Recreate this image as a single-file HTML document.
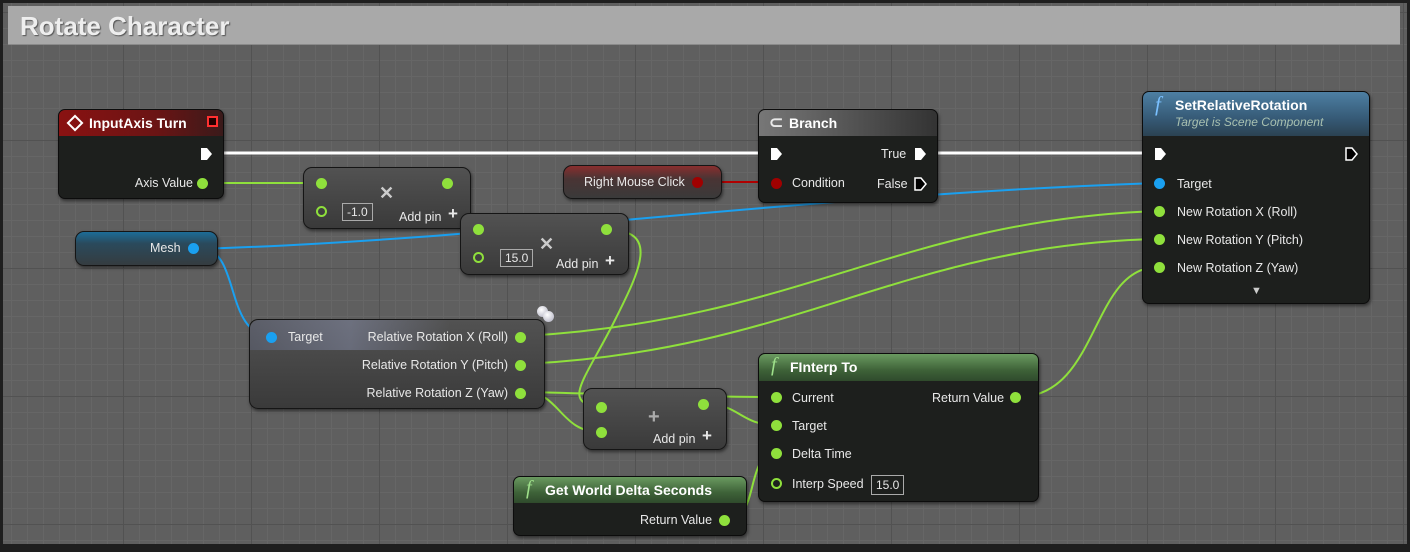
<!DOCTYPE html>
<html><head><meta charset="utf-8"><style>
*{margin:0;padding:0;box-sizing:border-box}
body{width:1410px;height:552px;background:#1e1e1e;overflow:hidden;position:relative;font-family:"Liberation Sans",sans-serif;color:#e8e8e8;font-size:12.5px}
#g{position:absolute;left:3px;top:3px;width:1404px;height:541px;background-color:#5f5f5f;
background-image:linear-gradient(#525252 1px,transparent 1px),linear-gradient(90deg,#525252 1px,transparent 1px),linear-gradient(#666 1px,transparent 1px),linear-gradient(90deg,#666 1px,transparent 1px);
background-size:128px 128px,128px 128px,16px 16px,16px 16px;background-position:-8px 9px,-8px 9px,-8px 9px,-8px 9px}
.ch{position:absolute;left:8px;top:6px;width:1392px;height:39px;background:#a9a9a9;border-bottom:1px solid #8a8a8a}
.ch span{position:absolute;left:12px;top:5px;font-size:26px;font-weight:bold;color:#eee;text-shadow:1px 1px 1px #555}
.n{position:absolute;background:#1d1f1d;border:1px solid #0c0c0c;border-radius:7px;box-shadow:1px 2px 3px rgba(0,0,0,.5);overflow:hidden}
.h{position:absolute;left:0;right:0;top:0;font-weight:bold;font-size:14px;padding-left:30px;padding-top:5px;color:#fff}
.c{position:absolute;background:linear-gradient(#525252,#3a3a3a);border:1px solid #151515;border-radius:9px;box-shadow:1px 2px 3px rgba(0,0,0,.5)}
.t{position:absolute;white-space:nowrap;color:#e8e8e8}
.p{position:absolute;width:11px;height:11px;border-radius:50%;background:#8fe03c}
.po{position:absolute;width:11px;height:11px;border-radius:50%;border:2px solid #8fe03c}
.b{position:absolute;width:11px;height:11px;border-radius:50%;background:#1aa0f0}
.box{position:absolute;border:1px solid #aaa;padding:0 4px;height:18px;line-height:16px;font-size:12px}
svg{position:absolute;left:0;top:0}
</style></head><body>
<div id="g"></div>
<div class="ch"><span>Rotate Character</span></div>
<svg width="1410" height="552" fill="none">
<path d="M220 153 H1150" stroke="#fff" stroke-width="3"/>
<path d="M208 183 H316" stroke="#8fe03c" stroke-width="2"/>
<path d="M452 183 C470 183 462 228 476 228" stroke="#8fe03c" stroke-width="2"/>
<path d="M697 182 H772" stroke="#b00000" stroke-width="2"/>
<path d="M196 249 C500 240 800 195 1158 183" stroke="#1aa0f0" stroke-width="2"/>
<path d="M205 249 C240 255 225 336 272 336" stroke="#1aa0f0" stroke-width="2"/>
<path d="M525 336 C800 320 900 220 1158 211" stroke="#8fe03c" stroke-width="2"/>
<path d="M525 364 C800 350 900 245 1158 239" stroke="#8fe03c" stroke-width="2"/>
<path d="M525 392 C560 392 560 432 600 432" stroke="#8fe03c" stroke-width="2"/>
<path d="M525 392 C650 395 700 397 776 397" stroke="#8fe03c" stroke-width="2"/>
<path d="M608 230 C660 230 640 270 615 320 C585 380 560 404 600 406" stroke="#8fe03c" stroke-width="2"/>
<path d="M705 404 C740 404 740 425 776 425" stroke="#8fe03c" stroke-width="2"/>
<path d="M727 520 C760 520 745 453 776 453" stroke="#8fe03c" stroke-width="2"/>
<path d="M1018 397 C1100 397 1090 267 1158 267" stroke="#8fe03c" stroke-width="2"/>
</svg>

<div class="n" style="left:58px;top:109px;width:166px;height:90px">
<div class="h" style="height:26px;background:linear-gradient(90deg,#8a1212,#6a1414 60%,#3a1a1a)">InputAxis Turn</div>
<div style="position:absolute;left:10px;top:7px;width:12px;height:12px;border:2px solid #fff;transform:rotate(45deg)"></div>
<div style="position:absolute;left:148px;top:6px;width:11px;height:11px;border:2px solid #ff3030;background:#200"></div>
<svg style="left:141px;top:37px" width="14" height="14"><path d="M1 1H7L12 7L7 13H1Z" fill="#fff"/></svg>
<span class="t" style="right:30px;top:66px">Axis Value</span>
<div class="p" style="left:138px;top:68px"></div>
</div>

<div class="c" style="left:303px;top:167px;width:168px;height:62px">
<div class="p" style="left:12px;top:10px"></div><div class="p" style="left:138px;top:10px"></div>
<div class="po" style="left:12px;top:38px"></div>
<div class="box" style="left:38px;top:35px">-1.0</div>
<span class="t" style="left:75px;top:15px;font-size:18px;color:#ccc;font-weight:bold">✕</span>
<span class="t" style="left:95px;top:42px">Add pin</span><span class="t" style="left:144px;top:36px;font-size:17px;font-weight:bold">+</span>
</div>
<div class="c" style="left:460px;top:213px;width:169px;height:62px">
<div class="p" style="left:12px;top:10px"></div><div class="p" style="left:140px;top:10px"></div>
<div class="po" style="left:12px;top:38px"></div>
<div class="box" style="left:39px;top:35px">15.0</div>
<span class="t" style="left:78px;top:20px;font-size:18px;color:#ccc;font-weight:bold">✕</span>
<span class="t" style="left:95px;top:43px">Add pin</span><span class="t" style="left:144px;top:37px;font-size:17px;font-weight:bold">+</span>
</div>

<div class="c" style="left:75px;top:231px;width:143px;height:35px;background:linear-gradient(#1c6c98,#2a4a5c 35%,#353c40)">
<span class="t" style="left:74px;top:9px">Mesh</span>
<div class="b" style="left:112px;top:11px"></div>
</div>

<div class="c" style="left:563px;top:165px;width:159px;height:34px;background:linear-gradient(#8a2e2e,#4a3434 40%,#3a3a3a)">
<span class="t" style="left:20px;top:9px">Right Mouse Click</span>
<div style="position:absolute;left:128px;top:11px;width:11px;height:11px;border-radius:50%;background:#a00000"></div>
</div>

<div class="n" style="left:758px;top:109px;width:180px;height:94px">
<div class="h" style="height:26px;background:linear-gradient(90deg,#777,#555 50%,#333)">Branch</div>
<span class="t" style="left:10px;top:3px;font-size:17px;font-weight:bold">⊂</span>
<svg style="left:11px;top:37px" width="14" height="14"><path d="M1 1H7L12 7L7 13H1Z" fill="#fff"/></svg>
<span class="t" style="left:122px;top:37px">True</span>
<svg style="left:155px;top:37px" width="14" height="14"><path d="M1 1H7L12 7L7 13H1Z" fill="#fff"/></svg>
<div style="position:absolute;left:12px;top:68px;width:11px;height:11px;border-radius:50%;background:#a00000"></div>
<span class="t" style="left:33px;top:66px">Condition</span>
<span class="t" style="left:118px;top:67px">False</span>
<svg style="left:155px;top:67px" width="14" height="14"><path d="M1 1H7L12 7L7 13H1Z" stroke="#fff" stroke-width="1.5"/></svg>
</div>

<div class="n" style="left:1142px;top:91px;width:228px;height:213px">
<div class="h" style="height:44px;background:linear-gradient(#4d7fa3,#365a76 60%,#2b4252);padding-left:32px">SetRelativeRotation
<div style="font-weight:normal;font-style:italic;font-size:12px;color:#a8c0b0;margin-top:2px">Target is Scene Component</div></div>
<span class="t" style="left:12px;top:0px;font-size:21px;font-style:italic;font-family:'Liberation Serif',serif;color:#7ac0ff">f</span>
<svg style="left:11px;top:55px" width="14" height="14"><path d="M1 1H7L12 7L7 13H1Z" fill="#fff"/></svg>
<svg style="left:202px;top:55px" width="14" height="14"><path d="M1 1H7L12 7L7 13H1Z" stroke="#fff" stroke-width="1.5"/></svg>
<div class="b" style="left:11px;top:86px"></div><span class="t" style="left:34px;top:85px">Target</span>
<div class="p" style="left:11px;top:114px"></div><span class="t" style="left:34px;top:113px">New Rotation X (Roll)</span>
<div class="p" style="left:11px;top:142px"></div><span class="t" style="left:34px;top:141px">New Rotation Y (Pitch)</span>
<div class="p" style="left:11px;top:170px"></div><span class="t" style="left:34px;top:169px">New Rotation Z (Yaw)</span>
<span class="t" style="left:108px;top:193px;font-size:11px;color:#ccc">▼</span>
</div>

<div class="c" style="left:249px;top:319px;width:296px;height:90px">
<div style="position:absolute;left:0;top:0;width:200px;height:30px;border-radius:9px 0 0 0;background:linear-gradient(90deg,rgba(120,130,170,.25),rgba(160,170,210,.35) 50%,transparent)"></div>
<div class="b" style="left:16px;top:12px"></div><span class="t" style="left:38px;top:10px">Target</span>
<span class="t" style="right:36px;top:10px">Relative Rotation X (Roll)</span><div class="p" style="left:265px;top:12px"></div>
<span class="t" style="right:36px;top:38px">Relative Rotation Y (Pitch)</span><div class="p" style="left:265px;top:40px"></div>
<span class="t" style="right:36px;top:66px">Relative Rotation Z (Yaw)</span><div class="p" style="left:265px;top:68px"></div>
</div>
<div style="position:absolute;left:537px;top:306px;width:11px;height:11px;border-radius:50%;background:radial-gradient(circle at 40% 35%,#fff,#aab)"></div>
<div style="position:absolute;left:543px;top:311px;width:11px;height:11px;border-radius:50%;background:radial-gradient(circle at 40% 35%,#fff,#aab)"></div>

<div class="c" style="left:583px;top:388px;width:144px;height:62px">
<div class="p" style="left:12px;top:13px"></div><div class="p" style="left:114px;top:10px"></div>
<div class="p" style="left:12px;top:38px"></div>
<span class="t" style="left:64px;top:17px;font-size:20px;color:#aaa;font-weight:bold">+</span>
<span class="t" style="left:69px;top:43px">Add pin</span><span class="t" style="left:118px;top:37px;font-size:17px;font-weight:bold">+</span>
</div>

<div class="n" style="left:758px;top:353px;width:281px;height:149px">
<div class="h" style="height:27px;background:linear-gradient(#6a9a60,#3e6238 60%,#2f4a2c);padding-left:31px">FInterp To</div>
<span class="t" style="left:12px;top:0px;font-size:20px;font-style:italic;font-family:'Liberation Serif',serif;color:#9ee08a">f</span>
<div class="p" style="left:12px;top:38px"></div><span class="t" style="left:33px;top:37px">Current</span>
<span class="t" style="left:173px;top:37px">Return Value</span><div class="p" style="left:251px;top:38px"></div>
<div class="p" style="left:12px;top:66px"></div><span class="t" style="left:33px;top:65px">Target</span>
<div class="p" style="left:12px;top:94px"></div><span class="t" style="left:33px;top:93px">Delta Time</span>
<div class="po" style="left:12px;top:124px"></div><span class="t" style="left:33px;top:123px">Interp Speed</span>
<div class="box" style="left:112px;top:121px;height:20px;line-height:18px">15.0</div>
</div>

<div class="n" style="left:513px;top:476px;width:234px;height:60px">
<div class="h" style="height:26px;background:linear-gradient(#6a9a60,#3e6238 60%,#2f4a2c);padding-left:31px">Get World Delta Seconds</div>
<span class="t" style="left:12px;top:0px;font-size:20px;font-style:italic;font-family:'Liberation Serif',serif;color:#9ee08a">f</span>
<span class="t" style="left:126px;top:36px">Return Value</span><div class="p" style="left:205px;top:38px"></div>
</div>
</body></html>
